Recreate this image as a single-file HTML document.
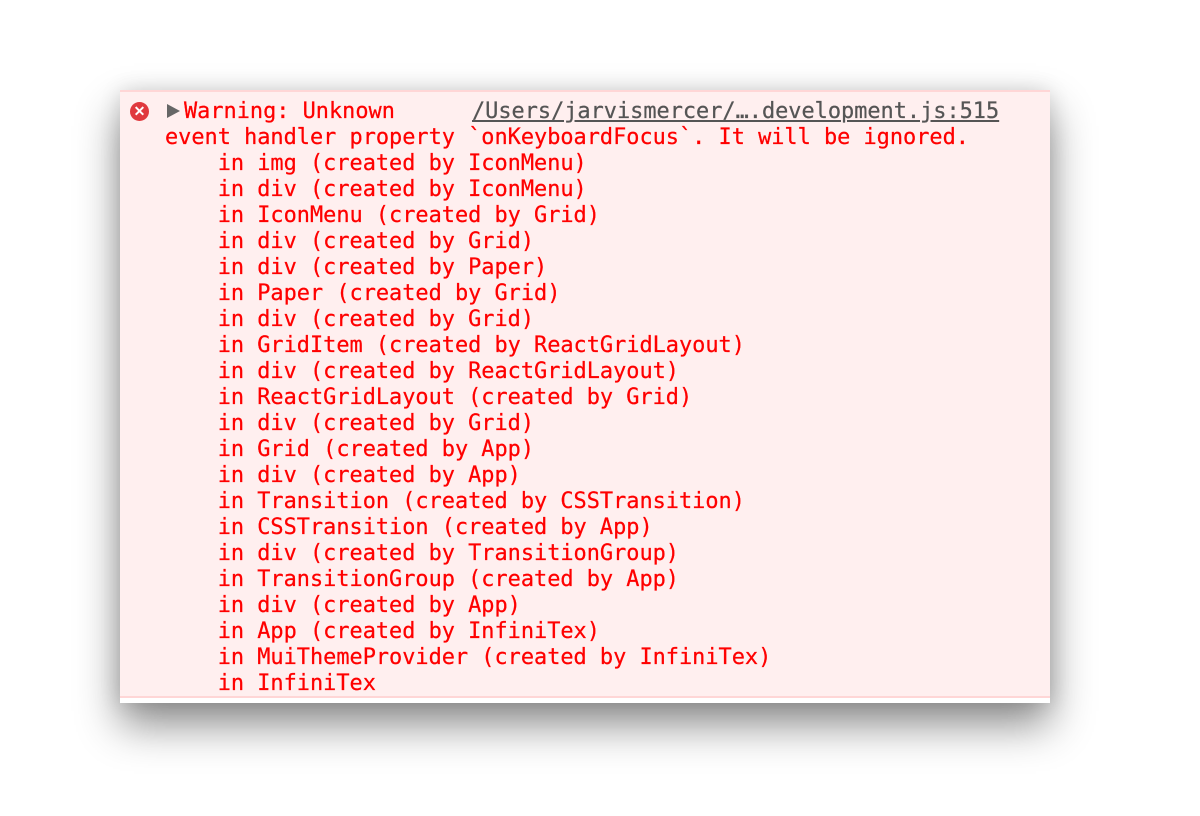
<!DOCTYPE html>
<html><head><style>
body{margin:0;width:1200px;height:816px;background:#fff;position:relative;overflow:hidden}
.panel{position:absolute;left:120px;top:90px;width:930px;height:613px;background:#fff;box-shadow:0 22px 40px rgba(0,0,0,0.45),0 0 20px rgba(0,0,0,0.12)}
.inner{position:absolute;left:0;top:0;width:930px;height:608px;background:#ffefef;border-top:2px solid #ffd6d6;border-bottom:2px solid #ffd6d6;box-sizing:border-box}
.t{position:absolute;left:45px;top:7px;font-family:"DejaVu Sans Mono","Liberation Mono",monospace;font-size:21.9px;line-height:26px;color:#ff0000;white-space:pre;-webkit-text-stroke:0.25px #ff0000}
.w{left:64px}
.link{position:absolute;left:352px;top:7px;font-family:"DejaVu Sans Mono","Liberation Mono",monospace;font-size:21.9px;line-height:26px;color:#555;text-decoration:underline;white-space:pre;-webkit-text-stroke:0.25px #555}
.ic{position:absolute;left:10px;top:10px;width:19px;height:19px;border-radius:50%;background:#e0393e;color:#fff;font:bold 14px/19px "Liberation Sans",sans-serif;text-align:center}
.tri{position:absolute;left:47px;top:12px;width:0;height:0;border-left:13px solid #666;border-top:7px solid transparent;border-bottom:7px solid transparent}
</style></head><body>
<div class="panel"><div class="inner">
<div class="ic">✕</div>
<div class="tri"></div>
<div class="t w">Warning: Unknown</div>
<div class="t">
event handler property `onKeyboardFocus`. It will be ignored.
    in img (created by IconMenu)
    in div (created by IconMenu)
    in IconMenu (created by Grid)
    in div (created by Grid)
    in div (created by Paper)
    in Paper (created by Grid)
    in div (created by Grid)
    in GridItem (created by ReactGridLayout)
    in div (created by ReactGridLayout)
    in ReactGridLayout (created by Grid)
    in div (created by Grid)
    in Grid (created by App)
    in div (created by App)
    in Transition (created by CSSTransition)
    in CSSTransition (created by App)
    in div (created by TransitionGroup)
    in TransitionGroup (created by App)
    in div (created by App)
    in App (created by InfiniTex)
    in MuiThemeProvider (created by InfiniTex)
    in InfiniTex</div>
<div class="link">/Users/jarvismercer/….development.js:515</div>
</div></div>
</body></html>
